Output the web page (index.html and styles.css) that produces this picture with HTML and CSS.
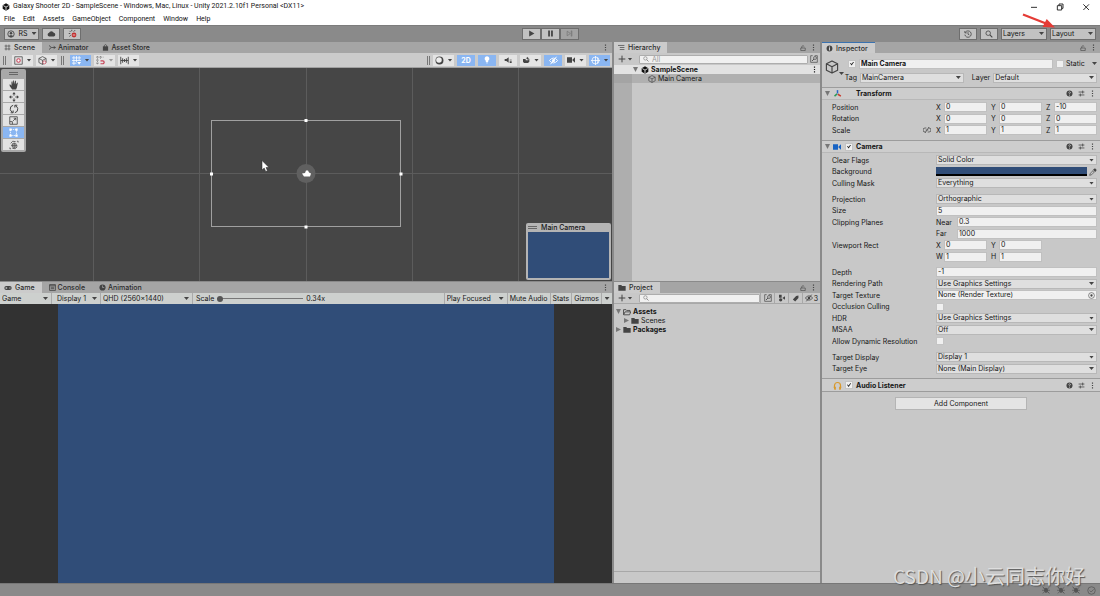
FILE: index.html
```html
<!DOCTYPE html>
<html lang="en">
<head>
<meta charset="utf-8">
<title>Galaxy Shooter 2D - SampleScene</title>
<link rel="stylesheet" href="styles.css">
</head>
<body>
<svg class="sprite" aria-hidden="true">
  <symbol id="unity" viewBox="0 0 12 12"><path d="M6 .3 11 3.200v5.600L6 11.700 1 8.800V3.200z" fill="currentColor"/><path d="M6 6.200V11M6 6.200 2 3.900M6 6.200l4-2.300" stroke="#e8e8e8" stroke-width="1.300"/></symbol>
  <symbol id="user" viewBox="0 0 12 12"><circle cx="6" cy="6" r="4.800" fill="none" stroke="currentColor" stroke-width="1.300"/><circle cx="6" cy="4.800" r="1.900" fill="currentColor"/><path d="M2.800 9.400C3.500 7.200 8.500 7.200 9.200 9.400L6 10.800z" fill="currentColor"/></symbol>
  <symbol id="cloud" viewBox="0 0 12 12"><path d="M3 10a2.500 2.500 0 0 1-.3-4.900A3.400 3.400 0 0 1 9 5a2.600 2.600 0 0 1 .3 5z" fill="currentColor"/></symbol>
  <symbol id="services" viewBox="0 0 12 12"><path d="M5 1v2M2 2.500l1.300 1.300M9.500 1.500 7.600 3.500M1 6h2M2 10l1.600-1.800" stroke="currentColor" stroke-width="1.200"/><circle cx="8" cy="8" r="3.200" fill="#c22f2f"/><path d="M6.300 8h3.400" stroke="#eee"/></symbol>
  <symbol id="play" viewBox="0 0 12 12"><path d="M2 1 11 6 2 11z" fill="currentColor"/></symbol>
  <symbol id="pause" viewBox="0 0 12 12"><path d="M2 1h3v10H2zM7 1h3v10H7z" fill="currentColor"/></symbol>
  <symbol id="step" viewBox="0 0 12 12"><path d="M2 2 7.500 6 2 10zM9 1.500h1v9H9z" fill="none" stroke="currentColor" stroke-width="1.300"/></symbol>
  <symbol id="history" viewBox="0 0 12 12"><path d="M2 3.500A4.800 4.800 0 1 1 1.300 7M1.300 1.500v2.800h2.800M6 3.200V6.300l2 1" fill="none" stroke="currentColor" stroke-width="1.200"/></symbol>
  <symbol id="search" viewBox="0 0 12 12"><circle cx="4.800" cy="4.800" r="3.400" fill="none" stroke="currentColor" stroke-width="1.200"/><path d="M7.400 7.400 11 11" stroke="currentColor" stroke-width="1.600"/></symbol>
  <symbol id="scene" viewBox="0 0 12 12"><path d="M3.500 1v10M8.500 1v10M1 3.500h10M1 8.500h10" stroke="currentColor" stroke-width="1.100"/></symbol>
  <symbol id="animator" viewBox="0 0 12 12"><path d="M0 2.500 4 6 0 9.500M4 6h7M8 4l3 2-3 2" fill="none" stroke="currentColor" stroke-width="1.400"/></symbol>
  <symbol id="bag" viewBox="0 0 12 12"><path d="M1.500 4h9v7.500h-9z" fill="currentColor"/><path d="M4 5V2.500Q6-.5 8 2.500V5" fill="none" stroke="currentColor" stroke-width="1.300"/></symbol>
  <symbol id="pivot" viewBox="0 0 12 12"><path d="M1 1h10v10H1z" fill="none" stroke="currentColor"/><circle cx="6" cy="6" r="2.300" fill="#fff" stroke="#c8465a" stroke-width="1.400"/></symbol>
  <symbol id="cube" viewBox="0 0 12 12"><path d="M6 .8 10.800 3.300v5.400L6 11.200 1.200 8.700V3.300zM1.200 3.300 6 5.800l4.800-2.500M6 5.800v5.400" fill="none" stroke="currentColor" stroke-linejoin="round"/></symbol>
  <symbol id="cubered" viewBox="0 0 12 12"><path d="M6 .8 10.800 3.300v5.400L6 11.200 1.200 8.700V3.300zM1.200 3.300 6 5.800l4.800-2.500M6 5.800v5.400" fill="none" stroke="currentColor"/><circle cx="8.500" cy="8.500" r="2" fill="#eee" stroke="#c8465a"/></symbol>
  <symbol id="grid" viewBox="0 0 12 12"><path d="M2.500 0v12M6 0v8M9.500 0v6M0 2.500h12M0 6h12M0 9.500h6" stroke="currentColor"/><path d="M7 8h5l-2.500 3.500z" fill="currentColor"/></symbol>
  <symbol id="snap" viewBox="0 0 12 12"><path d="M0 1.500h10M0 5.500h4M0 9.500h4M2 0v11M6 0v4" stroke="#777" stroke-dasharray="2 1"/><path d="M6 6.500h3a1.800 1.800 0 0 1 0 3.800H6" fill="none" stroke="#c8465a" stroke-width="1.600"/></symbol>
  <symbol id="ruler" viewBox="0 0 12 12"><path d="M1 1v10M11 1v10M1 6h10M3.500 3v6M6 4v4M8.500 3v6" stroke="currentColor" stroke-width="1.200"/></symbol>
  <symbol id="ball" viewBox="0 0 12 12"><circle cx="6" cy="6" r="5.300" fill="#444"/><circle cx="5.300" cy="5.300" r="3.700" fill="#eee"/></symbol>
  <symbol id="bulb" viewBox="0 0 12 12"><path d="M6 .5a3.600 3.600 0 0 1 1.800 6.700V9H4.200V7.200A3.600 3.600 0 0 1 6 .5M4.500 9.800h3L6 11.800z" fill="currentColor"/></symbol>
  <symbol id="speaker" viewBox="0 0 12 12"><path d="M1 4.500h2.500L7 2v8L3.500 7.500H1zM8.500 8h3v2.500h-3z" fill="currentColor"/><path d="M8.500 6h3" stroke="currentColor"/></symbol>
  <symbol id="effects" viewBox="0 0 12 12"><path d="M1.500 4.500h4v2h4v-2h1.500v4l-2 2H3l-1.500-2zM8 1l1 1.800 2 .4-1.800 1L8 5.500 7 3.800 5.500 3 7.300 2.500z" fill="currentColor"/></symbol>
  <symbol id="eyeoff" viewBox="0 0 12 12"><path d="M.5 6Q6-.5 11.500 6 6 12.500.5 6z" fill="none" stroke="currentColor" stroke-width="1.200"/><circle cx="6" cy="6" r="2" fill="currentColor"/><path d="M2 11 10 1" stroke="currentColor" stroke-width="1.300"/></symbol>
  <symbol id="camera" viewBox="0 0 12 12"><path d="M0 2h7.500v8H0zM8 5.500 12 2v8L8 6.500z" fill="currentColor"/></symbol>
  <symbol id="gizmo" viewBox="0 0 12 12"><circle cx="6" cy="6" r="4.700" fill="none" stroke="currentColor"/><path d="M6 0v12M0 6h12M8.500 2.500Q10 6 8.500 9.500" fill="none" stroke="currentColor"/></symbol>
  <symbol id="hand" viewBox="0 0 12 12"><path d="M3.800 11.500 1 7.500.5 5.500l1 0L3 7V2l1-.6.8 3.600L5 .6h1L6.500 5 7.300 1h1l0 4.500L9.800 3l.8.500L9.500 9l-1 2.500z" fill="currentColor"/></symbol>
  <symbol id="move" viewBox="0 0 12 12"><path d="M6 2v2.500M6 7.500V10M2 6h2.500M7.500 6H10" stroke="currentColor"/><path d="M6 0 8 2.600H4zM6 12 4 9.400h4zM0 6l2.600-2v4zM12 6 9.400 8V4z" fill="currentColor"/></symbol>
  <symbol id="rotate" viewBox="0 0 12 12"><path d="M5 1.500Q1 2.500 1.500 6.500 2 9 4.500 10M2 10.500h3V7.800M7 10.500Q11 9.500 10.500 5.500 10 3 7.500 2M10 1.500H7V4.200" fill="none" stroke="currentColor" stroke-width="1.200"/></symbol>
  <symbol id="scale" viewBox="0 0 12 12"><path d="M1 1h10v10H1zM1 7.500h3.500V11M5.500 6.500 9 3M6.300 3H9v2.700" fill="none" stroke="currentColor" stroke-width="1.100"/></symbol>
  <symbol id="rect" viewBox="0 0 12 12"><path d="M2 2h8v8H2z" fill="none" stroke="currentColor" stroke-dasharray="2 1"/><path d="M.5.5h3v3h-3zM8.500.5h3v3h-3zM.5 8.500h3v3h-3zM8.500 8.500h3v3h-3z" fill="currentColor"/></symbol>
  <symbol id="transform" viewBox="0 0 12 12"><path d="M2 4A4.500 4.500 0 0 1 8 2M10 8a4.500 4.500 0 0 1-6 2M4 4.500h4.500v4H4zM6.200 3v7M2.500 6.500h7.500M9.500 1.500l1.500 0v1.500M2.500 10.500H1V9" fill="none" stroke="currentColor" stroke-width=".9"/></symbol>
  <symbol id="list" viewBox="0 0 12 12"><path d="M0 2.500h11M3 6h8M3 9.500h8" stroke="currentColor" stroke-width="1.200"/></symbol>
  <symbol id="lock" viewBox="0 0 12 12"><path d="M1.500 6h9v5h-9zM3.500 6V3Q6-.5 8.500 3" fill="none" stroke="currentColor" stroke-width="1.200"/></symbol>
  <symbol id="dots" viewBox="0 0 4 12"><path d="M1 1h2v2H1zM1 5h2v2H1zM1 9h2v2H1z" fill="currentColor"/></symbol>
  <symbol id="plus" viewBox="0 0 12 12"><path d="M6 1v10M1 6h10" stroke="currentColor" stroke-width="1.500"/></symbol>
  <symbol id="picker" viewBox="0 0 12 12"><path d="M4 1H1v10h10V1H7" fill="none" stroke="currentColor"/><circle cx="7.500" cy="4.500" r="2.200" fill="none" stroke="currentColor"/><path d="M6 6 3 9" stroke="currentColor" stroke-width="1.300"/></symbol>
  <symbol id="info" viewBox="0 0 12 12"><circle cx="6" cy="6" r="5" fill="currentColor"/><path d="M6 2.500v2M6 5.300v4" stroke="#d0d0d0" stroke-width="1.800"/></symbol>
  <symbol id="axes" viewBox="0 0 12 12"><path d="M6 6V1.500" stroke="#2865c8" stroke-width="2"/><path d="M5.500 6.500 2 9.500" stroke="#2c9a58" stroke-width="2"/><path d="M6.500 7l4 2.500" stroke="#c93b2e" stroke-width="2"/></symbol>
  <symbol id="help" viewBox="0 0 12 12"><circle cx="6" cy="6" r="5.200" fill="currentColor"/><path d="M4.200 4.600Q6 2 7.600 4.200 7.800 5.300 6 6.200V7.300M6 8.300V9.800" fill="none" stroke="#d0d0d0" stroke-width="1.300"/></symbol>
  <symbol id="preset" viewBox="0 0 12 12"><path d="M1 3.500h10M8 1v5M1 8.500h10M4 6v5" stroke="currentColor" stroke-width="1.300"/></symbol>
  <symbol id="unlink" viewBox="0 0 12 12"><path d="M5 3H3a3 3 0 0 0 0 6h1M7 9h2a3 3 0 0 0 0-6H8M4 6h4M9 1.500l-6 9" fill="none" stroke="currentColor" stroke-width="1.100"/></symbol>
  <symbol id="dropper" viewBox="0 0 12 12"><path d="M1 11l.8-2.800L6 4l2 2-4.200 4.200z" fill="none" stroke="currentColor"/><path d="M6 2.500 9.500 6 11.500 3 9 .5z" fill="currentColor"/></symbol>
  <symbol id="target" viewBox="0 0 12 12"><circle cx="6" cy="6" r="5" fill="none" stroke="currentColor"/><circle cx="6" cy="6" r="2" fill="currentColor"/></symbol>
  <symbol id="phones" viewBox="0 0 12 12"><path d="M2 9V6a4 4 0 0 1 8 0v3" fill="none" stroke="currentColor" stroke-width="1.600"/><path d="M.8 7.500h3v4h-2zM8.200 7.500h3l-1 4h-2z" fill="currentColor"/></symbol>
  <symbol id="pad" viewBox="0 0 12 12"><rect x=".5" y="3" width="11" height="6" rx="3" fill="currentColor"/><path d="M2 6h3M3.500 4.500v3M7.500 6H10" stroke="#ccc"/></symbol>
  <symbol id="console" viewBox="0 0 12 12"><path d="M1 1h10v10H1zM1 3h10M3 5.500h6M3 8h6" fill="none" stroke="currentColor" stroke-width="1.400"/></symbol>
  <symbol id="clock" viewBox="0 0 12 12"><circle cx="6" cy="6" r="5.300" fill="currentColor"/><path d="M6 2.500V6h3" fill="none" stroke="#aaa" stroke-width="1.200"/></symbol>
  <symbol id="folder" viewBox="0 0 12 12"><path d="M.5 1.500h4.500l1 1.500h5.500V10H.5z" fill="currentColor"/></symbol>
  <symbol id="folderopen" viewBox="0 0 12 12"><path d="M.8 10V2.500H4.500l1 1.200h5V5.500M1 10.200 3 5.800h8.600L9.800 10.200z" fill="none" stroke="currentColor" stroke-width="1.300"/></symbol>
  <symbol id="types" viewBox="0 0 12 12"><path d="M1.500 1h4v4.500h-4zM6.500 6l4-2.500v5z" fill="currentColor"/><circle cx="4" cy="8.800" r="2.500" fill="currentColor"/></symbol>
  <symbol id="tag" viewBox="0 0 12 12"><path d="M1.500 7.500 7 1.500l4-.5v4L5.500 11z" fill="currentColor"/></symbol>
  <symbol id="bug" viewBox="0 0 12 12"><ellipse cx="6" cy="6.500" rx="3" ry="4" fill="currentColor"/><path d="M1 2l3 2.500M11 2 8 4.500M0 6.500h12M1 11l3-2.500M11 11 8 8.500M1 1l10 10" stroke="currentColor"/></symbol>
  <symbol id="check" viewBox="0 0 12 12"><circle cx="6" cy="6" r="5" fill="none" stroke="currentColor"/><path d="M3.500 6l2 2L9 4.500" fill="none" stroke="currentColor"/></symbol>
</svg>

<header class="titlebar">
  <svg class="i8"><use href="#unity"/></svg>
  <h1>Galaxy Shooter 2D - SampleScene - Windows, Mac, Linux - Unity 2021.2.10f1 Personal &lt;DX11&gt;</h1>
  <div class="winbtns">
    <button aria-label="Minimize"><svg class="i8" viewBox="0 0 12 12"><path d="M1.500 6.500h9" stroke="#222" stroke-width="1.400"/></svg></button>
    <button aria-label="Restore"><svg class="i8" viewBox="0 0 12 12"><path d="M2 4h6.500v6.500H2zM4.500 4V1.500h6V8H8.500" fill="none" stroke="#222" stroke-width="1.400"/></svg></button>
    <button aria-label="Close"><svg class="i8" viewBox="0 0 12 12"><path d="M2 2l8.500 8.500M10.500 2 2 10.500" stroke="#222" stroke-width="1.400"/></svg></button>
  </div>
</header>
<nav class="menu">
  <a href="#">File</a><a href="#">Edit</a><a href="#">Assets</a><a href="#">GameObject</a><a href="#">Component</a><a href="#">Window</a><a href="#">Help</a>
</nav>

<div class="appbar">
  <div class="group">
    <button class="btn account"><svg class="i8"><use href="#user"/></svg>RS<i class="caret"></i></button>
    <button class="btn" aria-label="Cloud"><svg class="i9"><use href="#cloud"/></svg></button>
    <button class="btn" aria-label="Services"><svg class="i9"><use href="#services"/></svg></button>
  </div>
  <div class="group playback">
    <button class="btn" aria-label="Play"><svg class="i7"><use href="#play"/></svg></button>
    <button class="btn" aria-label="Pause"><svg class="i7"><use href="#pause"/></svg></button>
    <button class="btn off" aria-label="Step"><svg class="i7"><use href="#step"/></svg></button>
  </div>
  <div class="group end">
    <button class="btn" aria-label="Undo history"><svg class="i8"><use href="#history"/></svg></button>
    <button class="btn" aria-label="Search"><svg class="i8"><use href="#search"/></svg></button>
    <span class="pick bar"><select aria-label="Layers"><option>Layers</option></select></span>
    <span class="pick bar"><select aria-label="Layout"><option>Layout</option></select></span>
  </div>
  <svg class="pointer" viewBox="0 0 34 16"><path d="M1 1.500 24 10.500" stroke="#e53b36" stroke-width="2.400"/><path d="M33 14.500 20.500 14l4.200-8z" fill="#e53b36"/></svg>
</div>

<main class="workspace">
  <section class="panel scene">
    <div class="tabs">
      <button class="tab on"><svg class="i7"><use href="#scene"/></svg>Scene</button>
      <button class="tab"><svg class="i7"><use href="#animator"/></svg>Animator</button>
      <button class="tab"><svg class="i7"><use href="#bag"/></svg>Asset Store</button>
      <svg class="dots push"><use href="#dots"/></svg>
    </div>
    <div class="scenebar">
      <i class="grip"></i>
      <button class="tool" aria-label="Pivot"><svg class="i9"><use href="#pivot"/></svg><i class="caret"></i></button>
      <button class="tool" aria-label="Orientation"><svg class="i9"><use href="#cubered"/></svg><i class="caret"></i></button>
      <i class="grip mid"></i>
      <button class="tool blue" aria-label="Grid"><svg class="i9"><use href="#grid"/></svg><i class="caret"></i></button>
      <button class="tool dim" aria-label="Snap"><svg class="i9"><use href="#snap"/></svg><i class="caret"></i></button>
      <button class="tool" aria-label="Increment"><svg class="i9"><use href="#ruler"/></svg><i class="caret"></i></button>
      <i class="grip push"></i>
      <button class="tool" aria-label="Draw mode"><svg class="i9"><use href="#ball"/></svg><i class="caret"></i></button>
      <button class="tool blue solo">2D</button>
      <button class="tool blue solo" aria-label="Lighting"><svg class="i8"><use href="#bulb"/></svg></button>
      <button class="tool solo" aria-label="Audio"><svg class="i8"><use href="#speaker"/></svg></button>
      <button class="tool" aria-label="Effects"><svg class="i8"><use href="#effects"/></svg><i class="caret"></i></button>
      <button class="tool blue solo" aria-label="Visibility"><svg class="i9"><use href="#eyeoff"/></svg></button>
      <button class="tool" aria-label="Camera"><svg class="i8"><use href="#camera"/></svg><i class="caret"></i></button>
      <button class="tool blue" aria-label="Gizmos"><svg class="i9"><use href="#gizmo"/></svg><i class="caret"></i></button>
    </div>
    <div class="canvas">
      <svg class="world" viewBox="0 0 612 213" preserveAspectRatio="xMidYMid slice">
        <path d="M93.500 0v213M199.500 0v213M306.500 0v213M412.500 0v213M518.500 0v213M0 105.500h612" stroke="#5c5c5c"/>
        <rect x="211.500" y="52.500" width="189" height="106" fill="none" stroke="#a0a0a0"/>
        <circle cx="306" cy="105.500" r="9.500" fill="#606060"/>
        <path d="M302 105.500l3-.5 1-2.500h2l1 2 2 1-1 3h-6z" fill="#fff"/>
        <path d="M304.500 51h3v3h-3zM304.500 157.500h3v3h-3zM210 104.500h3v3h-3zM399.500 104.500h3v3h-3z" fill="#fff"/>
        <path d="M262 92.500v9.500l2.200-2 1.500 3.500 1.800-.8-1.500-3.200h3z" fill="#fff" stroke="#222" stroke-width=".5"/>
      </svg>
      <div class="toolbox">
        <i class="handle"></i>
        <button aria-label="Hand"><svg class="i10"><use href="#hand"/></svg></button>
        <button aria-label="Move"><svg class="i10"><use href="#move"/></svg></button>
        <button aria-label="Rotate"><svg class="i10"><use href="#rotate"/></svg></button>
        <button aria-label="Scale"><svg class="i9"><use href="#scale"/></svg></button>
        <button class="blue" aria-label="Rect"><svg class="i9"><use href="#rect"/></svg></button>
        <button aria-label="Transform"><svg class="i10"><use href="#transform"/></svg></button>
      </div>
      <figure class="preview">
        <figcaption><i class="handle"></i>Main Camera</figcaption>
        <div class="shot"></div>
      </figure>
    </div>
  </section>

  <section class="panel hierarchy">
    <div class="tabs">
      <button class="tab on"><svg class="i7"><use href="#list"/></svg>Hierarchy</button>
      <svg class="i6 push"><use href="#lock"/></svg><svg class="dots"><use href="#dots"/></svg>
    </div>
    <div class="searchbar">
      <button class="add" aria-label="Create"><svg class="i8"><use href="#plus"/></svg><i class="caret"></i></button>
      <label class="find"><svg class="i6"><use href="#search"/></svg><input type="text" placeholder="All" aria-label="Search hierarchy"></label>
      <button class="bare" aria-label="Search window"><svg class="i8"><use href="#picker"/></svg></button>
    </div>
    <ul class="objects">
      <li class="root"><i class="fold"></i><svg class="i8"><use href="#unity"/></svg>SampleScene<svg class="dots push"><use href="#dots"/></svg></li>
      <li class="child"><svg class="i8"><use href="#cube"/></svg>Main Camera</li>
    </ul>
  </section>

  <section class="panel inspector">
    <div class="tabs">
      <button class="tab on focus"><svg class="i7"><use href="#info"/></svg>Inspector</button>
      <svg class="i6 push"><use href="#lock"/></svg><svg class="dots"><use href="#dots"/></svg>
    </div>
    <div class="object">
      <div class="badge"><svg class="i14"><use href="#cube"/></svg><i class="caret"></i></div>
      <div class="objfields">
        <div class="line">
          <input type="checkbox" checked aria-label="Active">
          <input type="text" class="name" value="Main Camera" aria-label="Name">
          <label class="static"><input type="checkbox">Static</label><i class="caret"></i>
        </div>
        <div class="line">
          <label for="tag" class="tag">Tag</label><span class="pick"><select id="tag"><option>MainCamera</option></select></span>
          <label for="layer" class="layer">Layer</label><span class="pick"><select id="layer"><option>Default</option></select></span>
        </div>
      </div>
    </div>

    <div class="comp">
      <i class="fold"></i><svg class="i9"><use href="#axes"/></svg><span></span><h2>Transform</h2>
      <svg class="i7"><use href="#help"/></svg><svg class="i7"><use href="#preset"/></svg><svg class="dots"><use href="#dots"/></svg>
    </div>
    <div class="props">
      <div class="rows">
        <div class="row"><span>Position</span><div class="vec"><label>X<input type="text" value="0"></label><label>Y<input type="text" value="0"></label><label>Z<input type="text" value="-10"></label></div></div>
        <div class="row"><span>Rotation</span><div class="vec"><label>X<input type="text" value="0"></label><label>Y<input type="text" value="0"></label><label>Z<input type="text" value="0"></label></div></div>
        <div class="row"><span class="linked">Scale<svg class="i8"><use href="#unlink"/></svg></span><div class="vec"><label>X<input type="text" value="1"></label><label>Y<input type="text" value="1"></label><label>Z<input type="text" value="1"></label></div></div>
      </div>
    </div>

    <div class="comp">
      <i class="fold"></i><svg class="i8 vid"><use href="#camera"/></svg><input type="checkbox" checked aria-label="Camera enabled"><h2>Camera</h2>
      <svg class="i7"><use href="#help"/></svg><svg class="i7"><use href="#preset"/></svg><svg class="dots"><use href="#dots"/></svg>
    </div>
    <div class="props">
      <div class="rows">
        <div class="row"><label for="clear">Clear Flags</label><span class="pick"><select id="clear"><option>Solid Color</option></select></span></div>
        <div class="row"><span>Background</span><div class="colour"><button class="swatch" aria-label="Background colour"></button><svg class="i8"><use href="#dropper"/></svg></div></div>
        <div class="row"><label for="mask">Culling Mask</label><span class="pick"><select id="mask"><option>Everything</option></select></span></div>
      </div>
      <div class="rows">
        <div class="row"><label for="proj">Projection</label><span class="pick"><select id="proj"><option>Orthographic</option></select></span></div>
        <div class="row"><label for="size">Size</label><input type="text" id="size" value="5"></div>
        <div class="row"><span>Clipping Planes</span><label class="plane">Near<input type="text" value="0.3"></label></div>
        <div class="row"><span></span><label class="plane">Far<input type="text" value="1000"></label></div>
        <div class="row"><span>Viewport Rect</span><div class="vec"><label>X<input type="text" value="0"></label><label>Y<input type="text" value="0"></label></div></div>
        <div class="row"><span></span><div class="vec"><label>W<input type="text" value="1"></label><label>H<input type="text" value="1"></label></div></div>
      </div>
      <div class="rows">
        <div class="row"><label for="depth">Depth</label><input type="text" id="depth" value="-1"></div>
        <div class="row"><label for="path">Rendering Path</label><span class="pick"><select id="path"><option>Use Graphics Settings</option></select></span></div>
        <div class="row"><label for="tex">Target Texture</label><div class="ref"><input type="text" id="tex" value="None (Render Texture)"><svg class="i7"><use href="#target"/></svg></div></div>
        <div class="row"><label for="occ">Occlusion Culling</label><input type="checkbox" id="occ"></div>
        <div class="row"><label for="hdr">HDR</label><span class="pick"><select id="hdr"><option>Use Graphics Settings</option></select></span></div>
        <div class="row"><label for="msaa">MSAA</label><span class="pick"><select id="msaa"><option>Off</option></select></span></div>
        <div class="row"><label for="dyn">Allow Dynamic Resolution</label><input type="checkbox" id="dyn"></div>
      </div>
      <div class="rows">
        <div class="row"><label for="disp">Target Display</label><span class="pick"><select id="disp"><option>Display 1</option></select></span></div>
        <div class="row"><label for="eye">Target Eye</label><span class="pick"><select id="eye"><option>None (Main Display)</option></select></span></div>
      </div>
    </div>

    <div class="comp last">
      <span></span><svg class="i9 phones"><use href="#phones"/></svg><input type="checkbox" checked aria-label="Audio Listener enabled"><h2>Audio Listener</h2>
      <svg class="i7"><use href="#help"/></svg><svg class="i7"><use href="#preset"/></svg><svg class="dots"><use href="#dots"/></svg>
    </div>
    <button class="addcomp">Add Component</button>
  </section>

  <section class="panel game">
    <div class="tabs">
      <button class="tab on"><svg class="i8"><use href="#pad"/></svg>Game</button>
      <button class="tab"><svg class="i7"><use href="#console"/></svg>Console</button>
      <button class="tab"><svg class="i7"><use href="#clock"/></svg>Animation</button>
      <svg class="dots push"><use href="#dots"/></svg>
    </div>
    <div class="gamebar">
      <span class="pick flat w-view"><select aria-label="View"><option>Game</option></select></span>
      <span class="pick flat w-display"><select aria-label="Display"><option>Display 1</option></select></span>
      <span class="pick flat w-res"><select aria-label="Resolution"><option>QHD (2560x1440)</option></select></span>
      <label class="zoom">Scale<input type="range" min="0" max="100" value="0"></label><output>0.34x</output>
      <span class="pick flat push w-focus"><select aria-label="Play mode"><option>Play Focused</option></select></span>
      <button>Mute Audio</button><button>Stats</button><button>Gizmos</button><button class="more" aria-label="Gizmo options"><i class="caret"></i></button>
    </div>
    <div class="stage"><div class="frame"></div></div>
  </section>

  <section class="panel project">
    <div class="tabs">
      <button class="tab on"><svg class="i8"><use href="#folder"/></svg>Project</button>
      <svg class="i6 push"><use href="#lock"/></svg><svg class="dots"><use href="#dots"/></svg>
    </div>
    <div class="searchbar ruled">
      <button class="add" aria-label="Create"><svg class="i8"><use href="#plus"/></svg><i class="caret"></i></button>
      <label class="find"><svg class="i6"><use href="#search"/></svg><input type="text" aria-label="Search project"></label>
      <button class="bare" aria-label="Search window"><svg class="i8"><use href="#picker"/></svg></button>
      <button class="bare" aria-label="Types"><svg class="i8"><use href="#types"/></svg></button>
      <button class="bare" aria-label="Labels"><svg class="i7"><use href="#tag"/></svg></button>
      <button class="bare"><svg class="i8"><use href="#eyeoff"/></svg>3</button>
    </div>
    <ul class="files">
      <li class="bold"><i class="fold"></i><svg class="i8"><use href="#folderopen"/></svg>Assets</li>
      <li class="nested"><i class="fold shut"></i><svg class="i8"><use href="#folder"/></svg>Scenes</li>
      <li class="bold"><i class="fold shut"></i><svg class="i8"><use href="#folder"/></svg>Packages</li>
    </ul>
    <div class="pathbar"></div>
  </section>
</main>

<footer class="status">
  <svg class="i8"><use href="#bug"/></svg><svg class="i8"><use href="#bug"/></svg><svg class="i8"><use href="#bug"/></svg><svg class="i9"><use href="#check"/></svg>
</footer>
<div class="watermark">CSDN @<span lang="zh">小云同志你好</span></div>
</body>
</html>
```

FILE: styles.css
```css
* { box-sizing: border-box; margin: 0; padding: 0; }

body {
  display: flex;
  flex-direction: column;
  height: 100vh;
  position: relative;
  overflow: hidden;
  background: #8a8a8a;
  color: #161616;
  font: 7px/9px Inter, "Liberation Sans", sans-serif;
}

button, input, select { font: inherit; color: inherit; border: 0; background: none; border-radius: 0; min-width: 0; }
button { display: flex; align-items: center; justify-content: center; white-space: nowrap; }
ul { list-style: none; }
svg { flex: none; display: block; color: #444; }
.sprite { position: absolute; width: 0; height: 0; }

.i6 { width: 6px; height: 6px; }
.i7 { width: 7px; height: 7px; }
.i8 { width: 8px; height: 8px; }
.i9 { width: 9px; height: 9px; }
.i10 { width: 10px; height: 10px; }
.i14 { width: 14px; height: 14px; }
.dots { width: 3px; height: 7px; }
.push { margin-left: auto; }

.caret, .pick::after {
  content: "";
  flex: none;
  width: 5px;
  height: 3px;
  background: #444;
  clip-path: polygon(0 0, 100% 0, 50% 100%);
}

.fold { flex: none; width: 5px; height: 5px; background: #777; clip-path: polygon(0 0, 100% 0, 50% 100%); }
.fold.shut { clip-path: polygon(0 0, 100% 50%, 0 100%); }

input[type="text"] { height: 10px; width: 100%; padding: 0 2px; background: #f0f0f0; box-shadow: inset 0 0 0 1px #c0c0c0; line-height: 10px; }

input[type="checkbox"] {
  appearance: none;
  flex: none;
  width: 8px;
  height: 8px;
  padding: 1px;
  background: #f0f0f0;
  border: 1px solid #c4c4c4;
}
input[type="checkbox"]:checked::before {
  content: "";
  display: block;
  width: 100%;
  height: 100%;
  background: #222;
  clip-path: polygon(0 45%, 20% 40%, 40% 65%, 85% 0, 100% 15%, 40% 100%);
}

.pick { display: grid; grid-template-columns: minmax(0, 1fr) 8px; align-items: center; height: 10px; background: #dfdfdf; box-shadow: inset 0 0 0 1px #b8b8b8; }
.pick select { appearance: none; grid-area: 1 / 1 / 2 / 3; height: 10px; padding: 0 2px; line-height: 10px; }
.pick::after { grid-area: 1 / 2; }

.titlebar { display: flex; align-items: center; gap: 3px; height: 13px; flex: none; padding-left: 2px; background: #fff; font-family: Roboto, sans-serif; }
.titlebar h1 { font-size: 7px; font-weight: 400; }
.titlebar svg { color: #111; }
.winbtns { display: flex; gap: 18px; margin-left: auto; padding-right: 10px; }

.menu { display: flex; gap: 8px; height: 12px; flex: none; align-items: center; padding-left: 4px; background: #fff; font: 7px/9px Roboto, sans-serif; }
.menu a { color: #111; text-decoration: none; }

.appbar { display: grid; grid-template-columns: 1fr auto 1fr; align-items: center; height: 17px; flex: none; padding: 0 4px 1px; border-top: 1px solid #7c7c7c; background: #8a8a8a; position: relative; }
.group { display: flex; gap: 3px; }
.group.end { justify-content: flex-end; }
.group.playback { gap: 0; }
.btn { height: 12px; width: 18px; background: #c2c2c2; border: 1px solid #6e6e6e; }
.playback .btn { width: 19px; }
.btn.off { background: #a2a2a2; }
.btn.off svg { color: #777; }
.btn.account { width: 35px; gap: 4px; }
.pick.bar { height: 12px; width: 46px; background: #c2c2c2; box-shadow: inset 0 0 0 1px #6e6e6e; }
.pointer { position: absolute; right: 44px; top: -13px; width: 34px; height: 16px; }

.workspace {
  flex: 1;
  min-height: 0;
  display: grid;
  grid-template-columns: 612fr 206fr 278fr;
  grid-template-rows: minmax(0, 239fr) minmax(0, 302fr);
  column-gap: 2px;
  grid-template-areas: "scene hierarchy inspector" "game project inspector";
}
.scene { grid-area: scene; }
.hierarchy { grid-area: hierarchy; }
.inspector { grid-area: inspector; }
.game { grid-area: game; }
.project { grid-area: project; }
.panel { display: flex; flex-direction: column; min-width: 0; min-height: 0; background: #c8c8c8; }

.tabs { display: flex; align-items: center; height: 11px; flex: none; gap: 3px; padding-right: 5px; background: #a5a5a5; }
.tabs .push + .dots { margin-left: 3px; }
.tab { height: 11px; gap: 2px; padding: 0 7px 0 4px; font-weight: 500; color: #2c2c2c; }
.tab.on { background: #cbcbcb; }
.tab.on:first-child { gap: 3px; }
.tab.focus { border-top: 1px solid #3a72b0; }
.game .tabs, .project .tabs { height: 12px; border-top: 1px solid #8a8a8a; }

.scenebar { display: flex; align-items: center; gap: 3px; height: 15px; flex: none; padding: 0 2px 0 3px; background: #cbcbcb; border-bottom: 1px solid #a0a0a0; }
.grip { width: 3px; height: 9px; margin-right: 3px; border: solid #777; border-width: 0 1px; }
.grip.mid { margin-left: 1px; }
.grip.push { margin-right: 0; }
.tool { height: 11px; width: 21px; gap: 4px; background: #e4e4e4; }
.tool.solo { width: 18px; }
.blue { background: #8ab6f2; }
.tool.blue { color: #fff; font-weight: 700; font-size: 7px; }
.blue svg { color: #fff; }
.dim .caret { background: #999; }

.canvas { flex: 1; min-height: 0; position: relative; background: #464646; overflow: hidden; }
.world { width: 100%; height: 100%; }
.toolbox { position: absolute; left: 1px; top: 1px; width: 25px; display: flex; flex-direction: column; gap: 1px; padding: 0 2px 2px; background: #a8a8a8; border-radius: 2px; }
.toolbox button { height: 11px; background: #e2e2e2; }
.toolbox button.blue { background: #8ab6f2; }
.toolbox button.blue svg { color: #fff; }
.handle { width: 9px; height: 3px; border: solid #666; border-width: 1px 0; }
.toolbox .handle { margin: 3px auto; }
.preview { position: absolute; right: 1px; bottom: 1px; width: 85px; display: flex; flex-direction: column; background: #b4b4b4; padding: 0 2px 2px; border-radius: 2px; }
.preview figcaption { display: flex; align-items: center; gap: 4px; height: 9px; font-weight: 500; }
.shot { height: 46px; background: #304d78; }

.searchbar { display: flex; align-items: center; height: 12px; flex: none; background: #c8c8c8; }
.searchbar.ruled { height: 11px; border-bottom: 1px solid #a8a8a8; }
.add { width: 22px; gap: 2px; }
.find { flex: 1; display: flex; align-items: center; gap: 2px; height: 9px; margin-left: 3px; padding-left: 3px; background: #f0f0f0; border: 1px solid #adadad; border-radius: 1px; }
.find svg { color: #777; }
.find input[type="text"] { background: none; box-shadow: none; height: 7px; line-height: 7px; padding: 0 1px; }
.find input::placeholder { color: #999; opacity: 1; }
.bare { width: 12px; height: 11px; gap: 1px; }
.ruled .bare { width: 14px; border-left: 1px solid #a8a8a8; }
.ruled .bare:last-child { width: 18px; }

.objects { flex: 1; background: linear-gradient(to right, #aeaeae 18px, #c8c8c8 18px); }
.objects li { display: flex; align-items: center; gap: 2px; height: 9px; }
.objects .root { padding: 0 4px 0 18px; background: #e2e2e2; font-weight: 700; }
.objects .root svg { color: #111; }
.objects .child { padding-left: 34px; background: linear-gradient(to right, #a4a4a4 18px, #b0b0b0 18px); }
.objects .fold { margin: 0 1px; }

.files { flex: 1; padding: 3px 0 0 2px; }
.files li { display: flex; align-items: center; gap: 2px; height: 9px; }
.files .bold { font-weight: 700; }
.files .nested { padding-left: 8px; }
.pathbar { height: 12px; border-top: 1px solid #a8a8a8; }

.gamebar { display: flex; align-items: center; height: 11px; flex: none; background: #cdd0ce; }
.pick.flat { height: 11px; background: none; box-shadow: none; border-right: 1px solid #aaa; }
.w-view { width: 52px; }
.w-display { width: 49px; padding-left: 3px; }
.w-res { width: 92px; }
.w-focus { width: 64px; }
.pick.flat.push { border-left: 1px solid #aaa; }
.gamebar button { height: 11px; padding: 0 2px; border-right: 1px solid #aaa; }
.gamebar .more { width: 10px; border: 0; }
.zoom { display: flex; align-items: center; gap: 3px; padding: 0 3px; }
.zoom input { appearance: none; width: 86px; height: 1px; background: #777; }
.zoom input::-webkit-slider-thumb { appearance: none; width: 6px; height: 6px; border-radius: 50%; background: #555; }

.stage { flex: 1; min-height: 0; display: flex; justify-content: center; background: #323232; }
.frame { height: 100%; aspect-ratio: 16 / 9; background: #304d78; }

.object { display: flex; padding: 5px 3px 0 3px; height: 34px; gap: 7px; }
.badge { display: flex; align-items: flex-end; width: 16px; height: 17px; }
.badge svg { align-self: center; }
.objfields { flex: 1; display: flex; flex-direction: column; gap: 3px; }
.line { display: flex; align-items: center; height: 11px; gap: 3px; }
.line .static { display: flex; gap: 2px; width: 33px; align-items: center; }
.line .name { flex: 1; font-weight: 700; }
.line .tag { display: flex; justify-content: flex-end; width: 9px; }
.line .layer { margin-left: 5px; }
.line .pick { flex: 1; }

.comp { display: grid; grid-template-columns: 5px 9px 8px minmax(0, 1fr) 9px 10px 3px; align-items: center; gap: 3px; height: 13px; padding: 0 6px 0 3px; background: #cdcdcd; border-top: 1px solid #9c9c9c; border-bottom: 1px solid #b8b8b8; }
.comp h2 { font-size: 7px; font-weight: 700; }
.comp .vid { color: #1763c4; }
.comp .phones { color: #d9992b; }
.comp.last { height: 14px; border-bottom-color: #9c9c9c; }

.props { display: flex; flex-direction: column; gap: 4px; padding: 1px 3px 4px 10px; }
.rows { display: grid; grid-auto-rows: 12px 11px; }
.row { display: grid; grid-template-columns: 104px minmax(0, 1fr); align-items: center; }
.linked { display: flex; justify-content: space-between; align-items: center; padding-right: 5px; }
.vec { display: grid; grid-template-columns: repeat(3, minmax(0, 1fr)); gap: 4px; }
.vec label { display: grid; grid-template-columns: 8px minmax(0, 1fr); align-items: center; }
.plane { display: grid; grid-template-columns: 21px minmax(0, 1fr); align-items: center; }
.colour { display: grid; grid-template-columns: minmax(0, 1fr) 8px; gap: 2px; align-items: center; }
.swatch { height: 9px; background: #304d78; border-bottom: 2px solid #000; }
.ref { display: flex; align-items: center; background: #f0f0f0; box-shadow: inset 0 0 0 1px #c0c0c0; height: 10px; padding-right: 2px; }
.ref input[type="text"] { background: none; box-shadow: none; }

.addcomp { align-self: center; width: 132px; height: 13px; margin-top: 5px; background: #e4e4e4; border: 1px solid #b4b4b4; }

.status { display: flex; align-items: center; justify-content: flex-end; gap: 7px; height: 13px; flex: none; padding-right: 4px; border-top: 1px solid #777; }
.status svg { color: #555; }

.watermark { position: absolute; right: 15px; bottom: 8px; font: 19px/24px "Noto Sans CJK SC", sans-serif; color: #dedede; text-shadow: 1px 1px 1px #555; white-space: nowrap; }
.watermark span { font-size: 20px; }
```
